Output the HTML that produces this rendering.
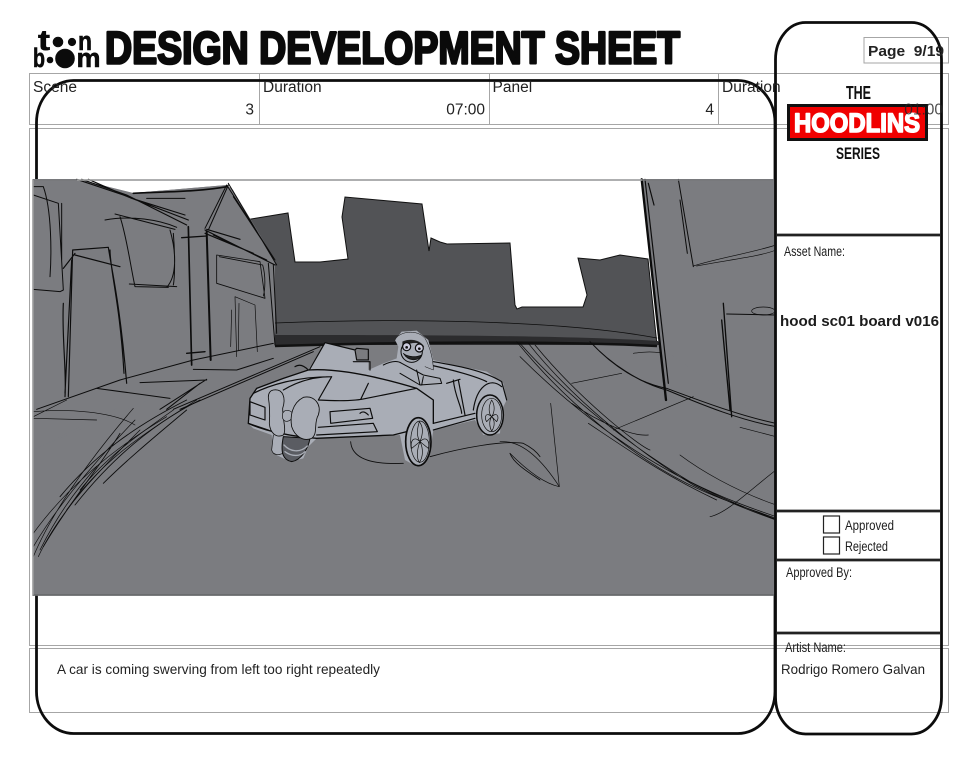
<!DOCTYPE html>
<html><head><meta charset="utf-8"><style>
html,body{margin:0;padding:0;background:#fff;width:979px;height:757px;overflow:hidden}
svg{display:block}
text{font-family:"Liberation Sans",sans-serif}
.c{font-size:15.500px;fill:#222}
.n{font-size:14px;fill:#222}
.m{font-size:13.500px;fill:#1c1c1c}
.l{fill:none;stroke:#0c0c0c;stroke-linecap:round;stroke-linejoin:round}
</style></head><body>
<svg width="979" height="757" viewBox="0 0 979 757" xmlns="http://www.w3.org/2000/svg">
<rect width="979" height="757" fill="#fff"/>
<g fill="none" stroke="#a6a6a6" stroke-width="1">
<rect x="29.500" y="73.500" width="919" height="51"/>
<path d="M259.500 73.500V124.500M489.500 73.500V124.500M718.500 73.500V124.500"/>
<rect x="29.500" y="128.500" width="919" height="517"/>
<rect x="29.500" y="648.500" width="919" height="64"/>
<rect x="864" y="37.500" width="84.500" height="25.500"/>
</g>
<!-- logo -->
<g fill="#0b0b0b" stroke="#0b0b0b" stroke-width=".6">
<text x="38" y="50" font-size="29" font-weight="700" textLength="12" lengthAdjust="spacingAndGlyphs">t</text>
<circle cx="58" cy="42" r="5"/><circle cx="72" cy="42" r="3.800"/>
<text x="78" y="50" font-size="27" font-weight="700" textLength="14" lengthAdjust="spacingAndGlyphs">n</text>
<text x="33" y="67" font-size="27" font-weight="700" textLength="12" lengthAdjust="spacingAndGlyphs">b</text>
<circle cx="50" cy="60" r="3"/><circle cx="65" cy="58.500" r="9.500"/>
<text x="76.500" y="67" font-size="27" font-weight="700" textLength="24" lengthAdjust="spacingAndGlyphs">m</text>
</g>
<text x="105" y="63.500" font-size="45" font-weight="700" fill="#0a0a0a" stroke="#0a0a0a" stroke-width="2.600" stroke-linejoin="round" textLength="575" lengthAdjust="spacingAndGlyphs">DESIGN DEVELOPMENT SHEET</text>
<!-- hoodlins logo -->
<text x="846" y="99" font-size="18" font-weight="700" fill="#111" textLength="25" lengthAdjust="spacingAndGlyphs">THE</text>
<rect x="788.500" y="105.500" width="138" height="34" fill="#f00000" stroke="#111" stroke-width="3"/>
<text x="794" y="132" font-size="27" font-weight="700" fill="#fff" stroke="#fff" stroke-width="1.600" stroke-linejoin="round" textLength="126" lengthAdjust="spacingAndGlyphs">HOODLINS</text>
<text x="836" y="159" font-size="17" font-weight="700" fill="#111" textLength="44" lengthAdjust="spacingAndGlyphs">SERIES</text>
<!-- outlines -->
<rect x="36.500" y="80.500" width="738.500" height="653" rx="37" ry="42" fill="none" stroke="#0c0c0c" stroke-width="2.800"/>
<!-- panel -->
<g style="filter:blur(.35px)">
<rect x="33" y="180" width="742" height="415" fill="#7b7c80"/>
<path d="M77 179H642L660 345H275L272 258L245 220L233 190L227 185L133 193Z" fill="#fff"/>
<path d="M245 220L288 213L295 262L320 262L348 259L342 217L345 197L422 204L429 251L431 238L440 242L447 244L510 243L515 305L517 309L522 307L583 307L587 295L578 258L600 260L620 255L648 259L657 345L275 345L272 260Z" fill="#525356" stroke="#111" stroke-width="1"/>
<path d="M275 335L275 345L660 345L658 341C560 335 400 335 275 335Z" fill="#2c2c2e"/>
<path d="M275 323C400 318 560 320 657 338" class="l" stroke-width=".8"/>
<path d="M77 179L133 193L227 185L233 190L275 260L275 345L190 372L33 450V179Z" fill="#7b7c80"/>
<path d="M642 179H775V427C730 415 690 395 667 387Z" fill="#7b7c80"/>
<path d="M275 345L657 345L775 427V595H33V450Z" fill="#7b7c80"/>
<path d="M275 346C400 342 560 341 657 346" stroke="#111" stroke-width="2.500" fill="none"/>
<!-- left buildings -->
<g transform="translate(20 170) scale(.33333)" class="l" stroke-width="3">
<path d="M170 28L310 75L505 150M185 28L320 75L500 165M205 28L335 85L495 135" stroke-width="3.500"/>
<path d="M340 70C440 65 540 65 620 50" stroke-width="5"/><path d="M380 85L495 85"/>
<path d="M620 45L555 175M625 45L565 180M620 45L765 270M625 40L770 285M640 80L765 270"/>
<path d="M555 180L765 285M555 190L700 250M560 178L660 208M580 195L740 270" stroke-width="3.500"/>
<path d="M505 170L515 585" stroke-width="5"/><path d="M560 185L572 570" stroke-width="6"/><path d="M485 203L560 198M500 550L555 545" stroke-width="4"/>
<path d="M285 132L465 178M255 150C330 135 420 150 470 172M300 140C320 200 330 280 345 350L445 352M450 180C470 250 470 320 440 352M328 342L470 350M460 190C465 250 465 320 460 345"/>
<path d="M158 240L265 232C275 300 300 400 320 640M270 240C270 300 300 400 312 610M158 240L145 680M165 250L130 295M165 255L300 290M130 400C125 500 140 600 135 680M155 270L135 670" stroke-width="3.500"/>
<path d="M40 50L70 50C95 120 95 250 90 320M40 75L115 100L130 360L120 365L40 358M125 100L125 270"/>
<path d="M590 255L720 275L735 385L590 340ZM598 260L728 285C738 320 735 360 730 378" stroke-width="2.500"/>
<path d="M645 380L705 405L712 545M645 380L650 560M657 400L655 540M635 420L632 530" stroke-width="2"/>
<path d="M745 280L765 525M760 285L770 490" stroke-width="3"/>
<path d="M50 718L300 630L520 570L760 520M230 655L450 685M360 638L560 630M520 598L650 600L760 565M420 718L560 628M440 718L540 640M460 718L900 530M480 718L880 545"/>
</g>
<!-- curb scribbles -->
<g transform="translate(0 400) scale(.33333)" class="l" stroke-width="2">
<path d="M100 470C150 350 250 200 400 25M100 440C170 320 290 180 405 60M115 470C180 330 300 210 420 90M100 400C180 290 300 170 500 50"/>
<path d="M225 315C300 220 420 90 600 0M310 250C370 190 440 130 560 30M180 290C280 170 400 80 560 0M130 440C200 320 300 200 360 100" stroke-width="2.600"/>
<path d="M100 50L200 0M100 35C200 25 340 35 405 75M100 55L290 60"/>
<path d="M240 270C320 170 420 100 520 30M200 330C300 190 400 120 590 0M120 450C170 350 220 280 290 200" stroke-width="2.200"/>
</g>
<!-- right building and road -->
<g transform="translate(500 170) scale(.33333)" class="l" stroke-width="2">
<path d="M425 28L498 690" stroke-width="7"/><path d="M435 28L505 640M445 40L462 105M428 60L490 620" stroke-width="3.500"/>
<path d="M535 28L580 290M540 90L562 250" stroke-width="3"/><path d="M580 288C650 265 750 250 828 225M590 288C680 270 780 260 828 240"/>
<path d="M670 400L695 740M665 450L690 720" stroke-width="4"/><path d="M680 432L826 435" stroke-width="3"/><ellipse cx="790" cy="423" rx="35" ry="12"/>
<path d="M270 515C330 580 420 640 500 660C620 710 720 750 828 770M275 520C340 590 420 640 500 655C620 700 730 740 828 760" stroke-width="3"/>
<path d="M720 772L828 800M400 550C430 545 460 545 480 548"/>
<path d="M50 515C200 700 400 860 560 940C660 990 760 1020 828 1045M60 520C210 690 410 840 570 935C680 990 770 1020 828 1040M85 520C220 690 420 850 580 945C690 1000 770 1030 828 1050M60 560C180 680 350 820 530 915C650 980 750 1020 828 1048M105 525C240 690 420 830 450 840M215 700C300 760 400 800 445 795M265 760C400 850 500 920 650 990" stroke-width="2.200"/>
<path d="M215 640L365 610M340 780L580 680M460 730L580 680"/>
<path d="M30 850C80 900 130 940 178 950L152 700M0 815C60 810 120 860 178 950"/>
<path d="M630 1040C680 1030 750 960 828 900M540 855C600 900 700 960 828 1005"/>
</g>
<!-- car -->
<g transform="translate(220 320) scale(.33333)">
<path d="M85 310L90 235L110 205L220 165L265 150L315 68L405 88L410 120L445 120L445 150L490 130L530 115L535 80L525 60L545 35L590 32L625 60L640 120L700 135L800 155L850 190L860 240L845 270L840 340L790 345L765 300L640 330L630 400L590 440L555 420L540 345L290 355L265 380L250 415L210 425L160 400L155 345L100 325Z" fill="#a9adb6"/>
<g class="l" stroke-width="3.500">
<path d="M268 150L315 68L405 90M405 90L410 120L445 120L445 88L410 85ZM400 125H450V150"/>
<path d="M90 235L110 205L190 175L265 150C340 145 440 160 590 205L640 240L640 310M85 310L90 235M85 310C140 335 220 350 290 355L520 345L560 335" stroke-width="4"/>
<path d="M100 220C150 195 230 170 335 170L295 240C380 245 420 240 440 235L590 205M335 170L295 240M445 190L422 238M190 210C240 180 290 170 335 170"/>
<path d="M295 322L460 310L472 335L290 345M330 275L450 265L458 295L332 310ZM420 280C430 270 440 280 445 285"/>
<path d="M90 245L135 262L135 300L90 285ZM85 310L145 330"/>
<path d="M640 310L765 280M640 330L765 295M715 180L735 285M700 180C705 230 725 260 725 280"/>
<path d="M640 125C700 135 790 150 845 185L860 240M680 190L720 178M760 270C770 200 810 170 845 200M630 135C700 150 770 170 800 185"/>
<path d="M490 135C510 125 530 120 545 130L610 165L660 175L665 190L600 195L540 160M590 150L600 195M610 170L605 195" stroke-width="3"/>
<path d="M225 140C240 130 255 140 265 150"/>
<ellipse cx="595" cy="365" rx="38" ry="72" fill="#a9adb6" stroke-width="5"/><ellipse cx="600" cy="365" rx="28" ry="62" fill="#a9adb6" stroke-width="2"/>
<path d="M598 305C590 330 590 350 600 365C610 340 610 320 598 305ZM600 365C590 390 590 415 598 428C610 410 610 385 600 365ZM600 365C580 345 570 365 575 385ZM600 365C620 345 630 365 625 385Z" stroke-width="2"/>
<ellipse cx="810" cy="285" rx="40" ry="60" fill="#a9adb6" stroke-width="4.500"/><ellipse cx="815" cy="285" rx="30" ry="50" fill="#a9adb6" stroke-width="2"/>
<path d="M815 240C805 260 805 280 815 290C825 275 825 255 815 240ZM815 290C805 305 810 325 815 333C825 320 825 300 815 290ZM815 290C800 275 790 290 800 305ZM815 290C830 275 840 290 830 305Z" stroke-width="2"/>
<path d="M392 365C395 410 440 435 550 430M630 410C720 385 850 360 910 370C930 380 950 395 960 410M870 400C880 430 930 460 960 480" stroke-width="2.500"/>
<path d="M160 345L155 390C160 410 185 405 195 395" fill="#a9adb6" stroke-width="2"/>
<path d="M190 350C180 400 190 420 215 425C245 420 265 385 270 355Z" fill="#5a5c62" stroke-width="3"/>
<path d="M192 375C210 395 240 400 262 378M195 395C215 410 240 410 255 395" stroke="#a9adb6" stroke-width="4"/>
<path d="M160 210C190 205 198 235 188 265C188 300 200 330 190 345C170 355 150 340 148 310C150 280 148 250 145 232C145 220 150 212 160 210Z" fill="#a9adb6" stroke-width="2.500"/>
<path d="M188 280C195 265 215 270 220 285C215 305 195 310 188 295Z" fill="#a9adb6" stroke-width="2"/>
<path d="M250 232C285 225 305 255 295 285C280 310 295 340 275 355C250 365 225 350 215 320C210 290 215 250 250 232Z" fill="#a9adb6" stroke-width="2.500"/>
<path d="M525 60C535 35 590 25 615 55C630 80 640 120 640 150L615 140" fill="#a9adb6" stroke-width="1.500"/>
<circle cx="575" cy="95" r="32" fill="#a9adb6" stroke-width="3"/>
<path d="M548 65C570 55 600 60 612 80L600 70C580 65 560 70 548 85Z" fill="#222" stroke-width="1"/>
<circle cx="560" cy="80" r="12" fill="#ccd" stroke-width="3.500"/><circle cx="598" cy="84" r="12" fill="#ccd" stroke-width="3.500"/><circle cx="560" cy="82" r="4" fill="#111" stroke="none"/><circle cx="598" cy="86" r="4" fill="#111" stroke="none"/>
<path d="M550 100C565 112 590 112 605 105C595 125 565 125 550 100Z" fill="#222" stroke-width="2"/>
</g></g>
<rect x="33" y="180" width="742" height="415" fill="none" stroke="#77787b" stroke-width="1.500"/>
<path d="M33 595H775" stroke="#66676a" stroke-width="1.500"/>
<path d="M77 180H642M33 180V595" stroke="#a8a8a8" stroke-width="1.200" fill="none"/>
</g>
<rect x="775.500" y="22.500" width="166" height="711.500" rx="30" ry="37" fill="none" stroke="#0c0c0c" stroke-width="2.800"/>
<g stroke="#222" stroke-width="2.800" fill="none">
<path d="M776 235H941M776 511H941M776 560H941M776 633H941"/>
</g>
<g fill="none" stroke="#222" stroke-width="1.200">
<rect x="823.500" y="516" width="16" height="17"/>
<rect x="823.500" y="537" width="16" height="17"/>
</g>
<!-- text -->
<text class="c" x="33" y="92">Scene</text><text class="c" x="263" y="92">Duration</text><text class="c" x="492.500" y="92">Panel</text><text class="c" x="722" y="92">Duration</text>
<text class="c" x="254" y="114.500" text-anchor="end">3</text><text class="c" x="485" y="114.500" text-anchor="end">07:00</text><text class="c" x="714" y="114.500" text-anchor="end">4</text><text class="c" x="943" y="114.500" text-anchor="end" fill-opacity=".8">01:00</text>
<text x="868" y="56" font-size="15" font-weight="700" fill="#222" textLength="76" lengthAdjust="spacingAndGlyphs" xml:space="preserve">Page  9/19</text>
<text x="780" y="326" font-size="15" font-weight="700" fill="#1c1c1c" textLength="159" lengthAdjust="spacingAndGlyphs">hood sc01 board v016</text>
<text class="m" x="784" y="256" textLength="61" lengthAdjust="spacingAndGlyphs">Asset Name:</text>
<text class="m" x="845" y="530" textLength="49" lengthAdjust="spacingAndGlyphs">Approved</text>
<text class="m" x="845" y="551" textLength="43" lengthAdjust="spacingAndGlyphs">Rejected</text>
<text class="m" x="786" y="577" textLength="66" lengthAdjust="spacingAndGlyphs">Approved By:</text>
<text class="m" x="785" y="652" textLength="61" lengthAdjust="spacingAndGlyphs">Artist Name:</text>
<text class="n" x="781" y="674" textLength="144" lengthAdjust="spacingAndGlyphs">Rodrigo Romero Galvan</text>
<text class="n" x="57" y="674" textLength="323" lengthAdjust="spacingAndGlyphs">A car is coming swerving from left too right repeatedly</text>
</svg>
</body></html>
